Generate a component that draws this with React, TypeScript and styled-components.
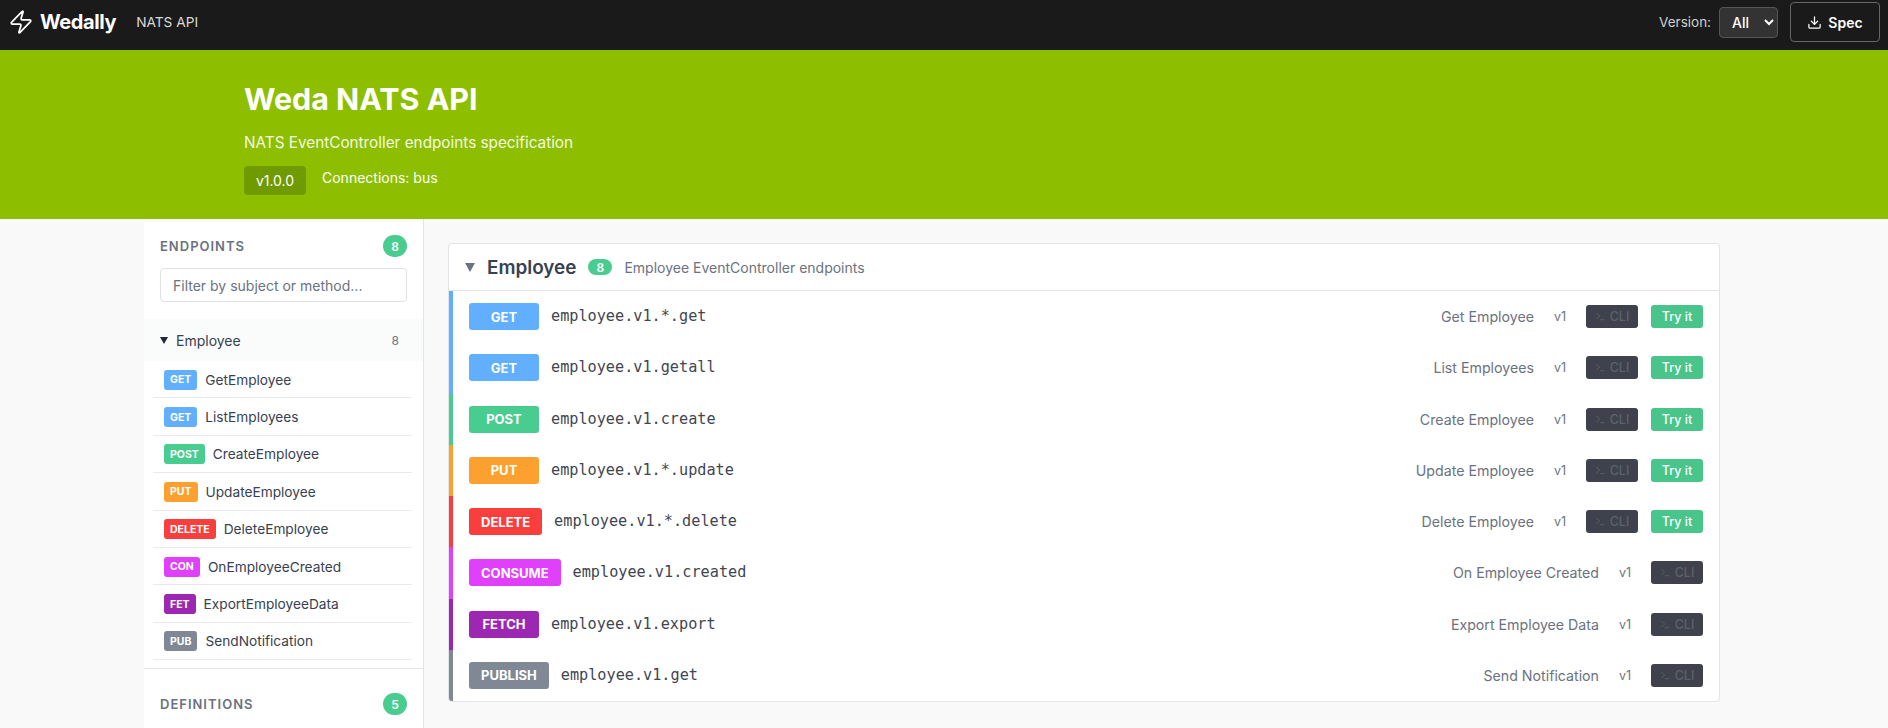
import React from "react";
import styled, { createGlobalStyle } from "styled-components";
import { Download, Terminal, Zap } from "lucide-react";

const Global = createGlobalStyle`
  html, body { margin: 0; padding: 0; height: 100%; overflow: hidden; background: #f9f9fa; }
  body { font-family: Inter, "Liberation Sans", sans-serif; }
  * { box-sizing: border-box; }
`;

const colors: Record<string, string> = {
  GET: "#61affe",
  POST: "#49cc90",
  PUT: "#fca130",
  DELETE: "#f93e3e",
  CONSUME: "#e040fb",
  FETCH: "#9c27b0",
  PUBLISH: "#808896",
};

const Page = styled.div`
  height: 728px;
  overflow: hidden;
  display: flex;
  flex-direction: column;
`;
const Nav = styled.header`
  height: 50px;
  flex: none;
  background: #1a1a1a;
  display: flex;
  align-items: center;
  padding: 0 8px 6px;
  color: #fff;
`;
const Logo = styled.div`
  display: flex;
  align-items: center;
  gap: 6px;
  font-size: 20px;
  font-weight: 700;
  letter-spacing: -0.4px;
`;
const NavLink = styled.span`
  margin-left: 20px;
  font-size: 13.7px;
  color: #d9d9d9;
`;
const NavRight = styled.div`
  margin-left: auto;
  display: flex;
  align-items: center;
`;
const VersionLabel = styled.label`
  font-size: 13.5px;
  color: #d0d0d0;
  margin-right: 8px;
`;
const VersionSelect = styled.select`
  width: 59px;
  height: 31px;
  background: #333;
  color: #fff;
  border: 1px solid #555;
  border-radius: 4px;
  font: 500 14px Inter, sans-serif;
  padding: 0 8px;
  margin-right: 12px;
`;
const SpecButton = styled.button`
  width: 90px;
  height: 40px;
  background: transparent;
  color: #fff;
  border: 1px solid #666;
  border-radius: 4px;
  font: 600 14px Inter, sans-serif;
  display: flex;
  align-items: center;
  justify-content: center;
  gap: 6px;
`;
const Hero = styled.section`
  height: 169px;
  flex: none;
  background: #8dbf00;
  color: #fff;
`;
const HeroInner = styled.div`
  width: 1400px;
  margin: 0 auto;
  padding-top: 30px;
`;
const Title = styled.h1`
  margin: 0;
  font-size: 30.4px;
  line-height: 39px;
  font-weight: 700;
`;
const Subtitle = styled.p`
  margin: 14px 0 0;
  font-size: 15.3px;
  line-height: 20px;
  color: #f4f9e2;
`;
const HeroMeta = styled.div`
  margin-top: 13px;
  display: flex;
  align-items: flex-start;
  gap: 16px;
`;
const VersionBadge = styled.span`
  width: 62px;
  height: 29px;
  background: #6f9a00;
  border-radius: 4px;
  font-size: 14px;
  display: flex;
  align-items: center;
  justify-content: center;
`;
const Connections = styled.span`
  font-size: 14px;
  line-height: 23px;
`;
const Layout = styled.div`
  width: 1600px;
  margin: 0 auto;
  flex: 1;
  min-height: 0;
  display: flex;
`;
const Sidebar = styled.aside`
  width: 280px;
  flex: none;
  background: #fff;
  border-right: 1px solid #e1e4e8;
`;
const SidebarHead = styled.div<{ $top: number }>`
  display: flex;
  align-items: center;
  justify-content: space-between;
  padding: ${(p) => p.$top}px 16px 11px;
`;
const SectionTitle = styled.h2`
  margin: 0;
  font-size: 13px;
  font-weight: 600;
  letter-spacing: 1px;
  color: #6b7280;
`;
const CountDot = styled.span`
  width: 24px;
  height: 22px;
  border-radius: 11px;
  background: #49cc90;
  color: #fff;
  font-size: 12px;
  font-weight: 600;
  display: flex;
  align-items: center;
  justify-content: center;
`;
const Filter = styled.input`
  display: block;
  width: 247px;
  height: 34px;
  margin: 0 16px;
  padding: 0 12px;
  border: 1px solid #dfe1e6;
  border-radius: 4px;
  font: 14px Inter, sans-serif;
  &::placeholder { color: #6b7280; opacity: 1; }
`;
const Group = styled.div`
  margin-top: 17px;
  height: 42px;
  padding: 0 16px;
  background: #fafbfb;
  display: flex;
  align-items: center;
  font-size: 14px;
  font-weight: 400;
  color: #374151;
`;
const Caret = styled.span<{ $size: number; $color: string }>`
  width: 0;
  height: 0;
  border-left: ${(p) => p.$size}px solid transparent;
  border-right: ${(p) => p.$size}px solid transparent;
  border-top: ${(p) => Math.round(p.$size * 1.8)}px solid ${(p) => p.$color};
`;
const GroupName = styled.span`
  margin-left: 8px;
`;
const GroupCount = styled.span`
  margin-left: auto;
  margin-right: 8px;
  font-size: 12px;
  font-weight: 400;
  color: #6b7280;
`;
const ItemList = styled.ul`
  list-style: none;
  margin: 0 0 0 9px;
  padding: 0;
  width: 259px;
`;
const Item = styled.li`
  height: 37.4px;
  padding: 1px 11px 0;
  border-bottom: 1px solid #e8eaed;
  display: flex;
  align-items: center;
  gap: 8px;
  font-size: 13.7px;
  color: #374151;
`;
const SmallBadge = styled.span<{ $color: string }>`
  height: 20px;
  padding: 0 6px;
  border-radius: 3px;
  background: ${(p) => p.$color};
  color: #fff;
  font-size: 10.5px;
  font-weight: 700;
  display: flex;
  align-items: center;
`;
const SectionDivider = styled.div`
  margin-top: 8px;
  border-top: 1px solid #e1e4e8;
`;
const Main = styled.main`
  flex: 1;
  padding: 24px;
`;
const Card = styled.section`
  width: 1272px;
  background: #fff;
  border: 1px solid #e1e4e8;
  border-radius: 4px;
  overflow: hidden;
`;
const CardHead = styled.div`
  height: 47px;
  display: flex;
  align-items: center;
  padding-left: 16px;
  border-bottom: 1px solid #e1e4e8;
`;
const CardTitle = styled.h3`
  margin: 0 0 0 12px;
  font-size: 18.9px;
  font-weight: 600;
  color: #374151;
`;
const CardCount = styled.span`
  margin-left: 12px;
  width: 24px;
  height: 16px;
  border-radius: 8px;
  background: #49cc90;
  color: #fff;
  font-size: 12px;
  font-weight: 600;
  display: flex;
  align-items: center;
  justify-content: center;
`;
const CardDesc = styled.span`
  margin-left: 12px;
  font-size: 14px;
  color: #6b7280;
`;
const Row = styled.div<{ $color: string }>`
  height: 51.25px;
  padding: 0 16px;
  border-left: 4px solid ${(p) => p.$color};
  display: flex;
  align-items: center;
`;
const MethodBadge = styled.span<{ $color: string }>`
  min-width: 70px;
  height: 27px;
  padding: 0 12px;
  border-radius: 3px;
  background: ${(p) => p.$color};
  color: #fff;
  font-size: 13px;
  font-weight: 700;
  display: flex;
  align-items: center;
  justify-content: center;
`;
const Subject = styled.code`
  margin-left: 12px;
  padding-bottom: 1px;
  font-family: "DejaVu Sans Mono", monospace;
  font-size: 15.2px;
  color: #3f4652;
`;
const Summary = styled.span`
  margin-left: auto;
  font-size: 14.2px;
  color: #6b7280;
`;
const Ver = styled.span`
  margin-left: 20px;
  width: 12px;
  font-size: 12.5px;
  color: #6b7280;
`;
const CliButton = styled.button`
  margin-left: 20px;
  width: 52px;
  height: 23px;
  padding: 0;
  background: #3f424c;
  border: 0;
  border-radius: 3px;
  color: #5b616d;
  font: 500 12.5px Inter, sans-serif;
  display: flex;
  align-items: center;
  justify-content: center;
  gap: 4px;
`;
const TryButton = styled.button`
  margin-left: 13px;
  width: 52px;
  height: 23px;
  padding: 0;
  background: #49c58c;
  border: 0;
  border-radius: 3px;
  color: #fff;
  font: 500 12.5px Inter, sans-serif;
`;

const endpoints = [
  { m: "GET", s: "GET", op: "GetEmployee", subj: "employee.v1.*.get", sum: "Get Employee", tryIt: true },
  { m: "GET", s: "GET", op: "ListEmployees", subj: "employee.v1.getall", sum: "List Employees", tryIt: true },
  { m: "POST", s: "POST", op: "CreateEmployee", subj: "employee.v1.create", sum: "Create Employee", tryIt: true },
  { m: "PUT", s: "PUT", op: "UpdateEmployee", subj: "employee.v1.*.update", sum: "Update Employee", tryIt: true },
  { m: "DELETE", s: "DELETE", op: "DeleteEmployee", subj: "employee.v1.*.delete", sum: "Delete Employee", tryIt: true },
  { m: "CONSUME", s: "CON", op: "OnEmployeeCreated", subj: "employee.v1.created", sum: "On Employee Created", tryIt: false },
  { m: "FETCH", s: "FET", op: "ExportEmployeeData", subj: "employee.v1.export", sum: "Export Employee Data", tryIt: false },
  { m: "PUBLISH", s: "PUB", op: "SendNotification", subj: "employee.v1.get", sum: "Send Notification", tryIt: false },
];

export default function App() {
  return (
    <Page>
      <Global />
      <Nav>
        <Logo>
          <Zap size={26} strokeWidth={1.6} />
          Wedally
        </Logo>
        <NavLink>NATS API</NavLink>
        <NavRight>
          <VersionLabel>Version:</VersionLabel>
          <VersionSelect defaultValue="All">
            <option>All</option>
          </VersionSelect>
          <SpecButton>
            <Download size={15} />
            Spec
          </SpecButton>
        </NavRight>
      </Nav>
      <Hero>
        <HeroInner>
          <Title>Weda NATS API</Title>
          <Subtitle>NATS EventController endpoints specification</Subtitle>
          <HeroMeta>
            <VersionBadge>v1.0.0</VersionBadge>
            <Connections>Connections: bus</Connections>
          </HeroMeta>
        </HeroInner>
      </Hero>
      <Layout>
        <Sidebar>
          <SidebarHead $top={16}>
            <SectionTitle>ENDPOINTS</SectionTitle>
            <CountDot>8</CountDot>
          </SidebarHead>
          <Filter placeholder="Filter by subject or method..." />
          <Group>
            <Caret $size={4} $color="#1f2937" />
            <GroupName>Employee</GroupName>
            <GroupCount>8</GroupCount>
          </Group>
          <ItemList>
            {endpoints.map((e) => (
              <Item key={e.op}>
                <SmallBadge $color={colors[e.m]}>{e.s}</SmallBadge>
                {e.op}
              </Item>
            ))}
          </ItemList>
          <SectionDivider />
          <SidebarHead $top={24}>
            <SectionTitle>DEFINITIONS</SectionTitle>
            <CountDot>5</CountDot>
          </SidebarHead>
        </Sidebar>
        <Main>
          <Card>
            <CardHead>
              <Caret $size={5} $color="#6b7280" />
              <CardTitle>Employee</CardTitle>
              <CardCount>8</CardCount>
              <CardDesc>Employee EventController endpoints</CardDesc>
            </CardHead>
            {endpoints.map((e) => (
              <Row key={e.op} $color={colors[e.m]}>
                <MethodBadge $color={colors[e.m]}>{e.m}</MethodBadge>
                <Subject>{e.subj}</Subject>
                <Summary>{e.sum}</Summary>
                <Ver>v1</Ver>
                <CliButton>
                  <Terminal size={11} />
                  CLI
                </CliButton>
                {e.tryIt && <TryButton>Try it</TryButton>}
              </Row>
            ))}
          </Card>
        </Main>
      </Layout>
    </Page>
  );
}
